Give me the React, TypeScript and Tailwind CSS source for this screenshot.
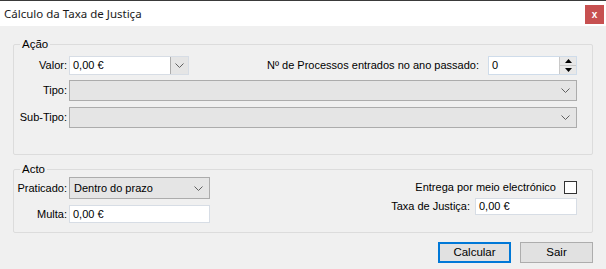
import React from "react";

const font = { fontFamily: '"Liberation Sans", Arial, sans-serif' };

function Chevron({ className = "" }: { className?: string }) {
  return (
    <svg width="9" height="5" viewBox="0 0 9 5" className={className}>
      <path d="M0.5 0.5 L4.5 4.5 L8.5 0.5" fill="none" stroke="#606060" strokeWidth="1" />
    </svg>
  );
}

function TextBox({ value, className = "" }: { value: string; className?: string }) {
  return (
    <div className={`flex items-center bg-white border border-[#d7dde5] pl-[3px] text-black ${className}`}>
      {value}
    </div>
  );
}

function Combo({ value = "", className = "" }: { value?: string; className?: string }) {
  return (
    <div className={`flex items-center justify-between bg-[#e5e5e5] border border-[#acacac] pl-[4px] pr-[6px] ${className}`}>
      <span>{value}</span>
      <Chevron />
    </div>
  );
}

function Label({ children }: { children: React.ReactNode }) {
  return <span className="w-[55px] shrink-0 whitespace-nowrap text-right pr-[2px]">{children}</span>;
}

export default function App() {
  return (
    <div className="w-[606px] h-[269px] bg-[#f0f0f0] text-[11px] text-black flex flex-col overflow-hidden" style={font}>
      {/* barra de título */}
      <div className="h-[26px] bg-white border-t border-[#3a3a3a] flex items-center justify-between pl-[4px] pr-[2px]">
        <span className="text-[11.5px] text-[#1a1a1a]" style={{ fontFamily: '"Noto Sans", sans-serif' }}>
          Cálculo da Taxa de Justiça
        </span>
        <div className="w-[19px] h-[19px] mt-[2px] bg-[#c75050] flex items-center justify-center text-white text-[10px] font-bold leading-none">
          x
        </div>
      </div>

      {/* Ação */}
      <fieldset className="mt-[11px] ml-[13px] w-[580px] h-[118px] border border-[#dcdcdc] rounded-[2px] px-0">
        <legend className="ml-[6px] px-[2px] leading-[14px] text-[11.5px]">Ação</legend>
        <div className="flex items-center mt-[5px] h-[19px]">
          <Label>Valor:</Label>
          <div className="flex w-[120px] h-[19px] bg-white border border-[#d7dde5]">
            <span className="flex-1 pl-[3px] flex items-center">0,00 €</span>
            <div className="w-[18px] h-full bg-[#e5e5e5] border-l border-[#acacac] flex items-center justify-center">
              <Chevron />
            </div>
          </div>
          <span className="ml-auto mr-[9px] whitespace-nowrap">Nº de Processos entrados no ano passado:</span>
          <div className="flex w-[89px] h-[19px] bg-white border border-[#cfdcea] mr-[15px]">
            <span className="flex-1 pl-[3px] flex items-center">0</span>
            <div className="w-[17px] flex flex-col border-l border-[#c9c9c9] bg-[#e8e8e8]">
              <div className="flex-1 flex items-center justify-center border-b border-[#c9c9c9]">
                <svg width="7" height="4" viewBox="0 0 7 4"><path d="M0 4 L3.5 0 L7 4 Z" fill="#000" /></svg>
              </div>
              <div className="flex-1 flex items-center justify-center">
                <svg width="7" height="4" viewBox="0 0 7 4"><path d="M0 0 L3.5 4 L7 0 Z" fill="#000" /></svg>
              </div>
            </div>
          </div>
        </div>
        <div className="flex items-center mt-[5px]">
          <Label>Tipo:</Label>
          <Combo className="w-[508px] h-[21px]" />
        </div>
        <div className="flex items-center mt-[6px]">
          <Label>Sub-Tipo:</Label>
          <Combo className="w-[508px] h-[21px]" />
        </div>
      </fieldset>

      {/* Acto */}
      <fieldset className="mt-[7px] ml-[13px] w-[580px] h-[71px] border border-[#dcdcdc] rounded-[2px]">
        <legend className="ml-[6px] px-[2px] leading-[14px] text-[11.5px]">Acto</legend>
        <div className="flex">
          <div className="flex flex-col">
            <div className="flex items-center mt-[1px]">
              <Label>Praticado:</Label>
              <Combo value="Dentro do prazo" className="w-[141px] h-[22px]" />
            </div>
            <div className="flex items-center mt-[6px]">
              <Label>Multa:</Label>
              <TextBox value="0,00 €" className="w-[141px] h-[18px]" />
            </div>
          </div>
          <div className="ml-auto mr-[15px] flex flex-col items-end">
            <div className="flex items-center mt-[3px]">
              <span>Entrega por meio electrónico</span>
              <div className="w-[13px] h-[13px] bg-white border border-[#333] ml-[8px]" />
            </div>
            <div className="flex items-center mt-[2px]">
              <span className="mr-[5px]">Taxa de Justiça:</span>
              <TextBox value="0,00 €" className="w-[102px] h-[17px]" />
            </div>
          </div>
        </div>
      </fieldset>

      {/* botões */}
      <div className="flex justify-end gap-[9px] mt-[9px] mr-[13px]">
        <button className="w-[73px] h-[21px] bg-[#e1e1e1] border-2 border-[#0078d7] text-[11.5px]">Calcular</button>
        <button className="w-[73px] h-[21px] bg-[#e1e1e1] border border-[#adadad] text-[11.5px]">Sair</button>
      </div>
    </div>
  );
}
